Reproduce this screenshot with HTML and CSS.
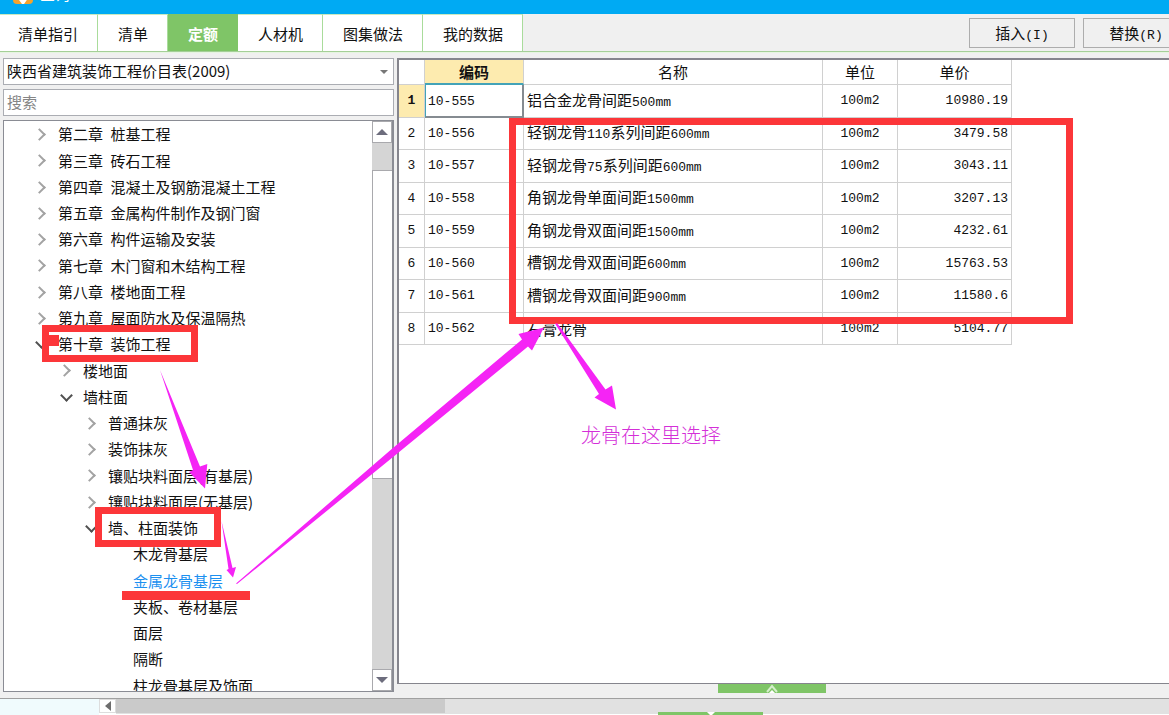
FILE: index.html
```html
<!DOCTYPE html>
<html lang="zh-CN">
<head>
<meta charset="utf-8">
<title>查询</title>
<link rel="stylesheet" href="styles.css">
</head>
<body>
<header class="titlebar">
  <svg class="app-icon" width="20" height="20" viewBox="0 0 20 20" aria-hidden="true"><rect width="20" height="20" rx="4" fill="#f5a32c"/><path d="M4 10 L10 18 L17 8" fill="none" stroke="#fff" stroke-width="4"/></svg>
  <span>查询</span>
</header>

<div class="toolbar">
  <nav class="tabs">
    <button class="tab">清单指引</button>
    <button class="tab">清单</button>
    <button class="tab active">定额</button>
    <button class="tab">人材机</button>
    <button class="tab">图集做法</button>
    <button class="tab">我的数据</button>
  </nav>
  <div class="actions">
    <button class="action">插入<span class="key">(I)</span></button>
    <button class="action">替换<span class="key">(R)</span></button>
  </div>
</div>

<main class="workspace">
  <section class="sidebar">
    <div class="select-wrap">
      <select class="field" aria-label="定额库"><option>陕西省建筑装饰工程价目表(2009)</option></select>
      <svg class="select-arrow" width="8" height="4" viewBox="0 0 8 4" aria-hidden="true"><path d="M0 0H8L4 4Z"/></svg>
    </div>
    <input class="field" type="text" placeholder="搜索" aria-label="搜索">
    <div class="tree-box">
      <ul class="tree">
        <li class="node l1 closed"><span class="chapter">第二章</span> 桩基工程</li>
        <li class="node l1 closed"><span class="chapter">第三章</span> 砖石工程</li>
        <li class="node l1 closed"><span class="chapter">第四章</span> 混凝土及钢筋混凝土工程</li>
        <li class="node l1 closed"><span class="chapter">第五章</span> 金属构件制作及钢门窗</li>
        <li class="node l1 closed"><span class="chapter">第六章</span> 构件运输及安装</li>
        <li class="node l1 closed"><span class="chapter">第七章</span> 木门窗和木结构工程</li>
        <li class="node l1 closed"><span class="chapter">第八章</span> 楼地面工程</li>
        <li class="node l1 closed"><span class="chapter">第九章</span> 屋面防水及保温隔热</li>
        <li class="node l1 open"><span class="chapter">第十章</span> 装饰工程</li>
        <li class="node l2 closed">楼地面</li>
        <li class="node l2 open">墙柱面</li>
        <li class="node l3 closed">普通抹灰</li>
        <li class="node l3 closed">装饰抹灰</li>
        <li class="node l3 closed">镶贴块料面层(有基层)</li>
        <li class="node l3 closed">镶贴块料面层(无基层)</li>
        <li class="node l3 open">墙、柱面装饰</li>
        <li class="node l4">木龙骨基层</li>
        <li class="node l4 selected">金属龙骨基层</li>
        <li class="node l4">夹板、卷材基层</li>
        <li class="node l4">面层</li>
        <li class="node l4">隔断</li>
        <li class="node l4">柱龙骨基层及饰面</li>
      </ul>
      <div class="vscroll">
        <button class="vbtn" aria-label="向上滚动"><svg width="12" height="6" viewBox="0 0 12 6"><path d="M0 6H12L6 0Z"/></svg></button>
        <div class="vtrack"><div class="vthumb"></div></div>
        <button class="vbtn" aria-label="向下滚动"><svg width="12" height="6" viewBox="0 0 12 6"><path d="M0 0H12L6 6Z"/></svg></button>
      </div>
    </div>
  </section>

  <section class="content">
    <div class="grid-box">
      <table class="grid">
        <colgroup><col class="c-num"><col class="c-code"><col class="c-name"><col class="c-unit"><col class="c-price"></colgroup>
        <thead><tr><th></th><th class="current">编码</th><th>名称</th><th>单位</th><th>单价</th></tr></thead>
        <tbody>
          <tr><th class="current">1</th><td class="code focus">10-555</td><td class="name">铝合金龙骨间距<span class="num">500mm</span></td><td class="unit">100m2</td><td class="price">10980.19</td></tr>
          <tr><th>2</th><td class="code">10-556</td><td class="name">轻钢龙骨<span class="num">110</span>系列间距<span class="num">600mm</span></td><td class="unit">100m2</td><td class="price">3479.58</td></tr>
          <tr><th>3</th><td class="code">10-557</td><td class="name">轻钢龙骨<span class="num">75</span>系列间距<span class="num">600mm</span></td><td class="unit">100m2</td><td class="price">3043.11</td></tr>
          <tr><th>4</th><td class="code">10-558</td><td class="name">角钢龙骨单面间距<span class="num">1500mm</span></td><td class="unit">100m2</td><td class="price">3207.13</td></tr>
          <tr><th>5</th><td class="code">10-559</td><td class="name">角钢龙骨双面间距<span class="num">1500mm</span></td><td class="unit">100m2</td><td class="price">4232.61</td></tr>
          <tr><th>6</th><td class="code">10-560</td><td class="name">槽钢龙骨双面间距<span class="num">600mm</span></td><td class="unit">100m2</td><td class="price">15763.53</td></tr>
          <tr><th>7</th><td class="code">10-561</td><td class="name">槽钢龙骨双面间距<span class="num">900mm</span></td><td class="unit">100m2</td><td class="price">11580.6</td></tr>
          <tr><th>8</th><td class="code">10-562</td><td class="name">石膏龙骨</td><td class="unit">100m2</td><td class="price">5104.77</td></tr>
        </tbody>
      </table>
    </div>
    <div class="splitter">
      <button class="handle" aria-label="展开"><svg width="12" height="9" viewBox="0 0 12 9"><path d="M1 8L6 2L11 8" fill="none" stroke="#d5eecb" stroke-width="2"/><path d="M3 9L6 6L9 9Z" fill="#fff"/></svg></button>
    </div>
  </section>
</main>

<footer class="bottom">
  <div class="corner"></div>
  <button class="hbtn" aria-label="向左滚动"><svg width="6" height="10" viewBox="0 0 6 10"><path d="M6 0V10L0 5Z"/></svg></button>
  <div class="htrack"><div class="hthumb"></div></div>
  <div class="lower-handle"><svg width="8" height="3" viewBox="0 0 8 3"><path d="M0 0H8L5 3H3Z" fill="#fff"/></svg></div>
</footer>

<svg class="marks" width="1169" height="715" viewBox="0 0 1169 715" aria-hidden="true">
  <g fill="none" stroke="#fc3639" stroke-width="7">
    <rect x="45.500" y="328.500" width="149" height="30"/>
    <rect x="98.500" y="510.500" width="119" height="33"/>
    <rect x="512.500" y="121.500" width="557" height="199"/>
  </g>
  <g fill="#fc3639">
    <rect x="49" y="335" width="10" height="11"/>
    <rect x="122" y="591" width="128" height="9"/>
  </g>
  <g fill="#f524f5">
    <path d="M160 370L200 466.500L207.300 464L205 488.500L189 472L193 470Z"/>
    <path d="M221.500 521L232.500 568L236 567L233 577.500L226.500 570L228.500 569Z"/>
    <path d="M236 583.500L390 450.500L522 339.500L518.500 334L544 327.500L532 350.500L528 346.500L390 459.500L237 584Z"/>
    <path d="M555 323.500L557.500 323.500L605.500 389.500L612 385.500L616 409.500L594.500 397.500L599 394Z"/>
  </g>
</svg>
<p class="note">龙骨在这里选择</p>
</body>
</html>
```

FILE: styles.css
```css
* { box-sizing: border-box; }

body {
  margin: 0;
  height: 100vh;
  display: flex;
  flex-direction: column;
  overflow: hidden;
  position: relative;
  background: #f0f0f0;
  color: #111;
  font: 15px/20px "Noto Sans CJK SC", sans-serif;
}

button, input, select { font: inherit; color: inherit; }
button { padding: 0; border: 0; background: none; }

.titlebar {
  flex: none;
  height: 14px;
  padding: 0 13px 10px;
  display: flex;
  align-items: flex-end;
  gap: 7px;
  overflow: hidden;
  background: #00aaf3;
  color: #fff;
}
.app-icon { flex: none; }

.toolbar {
  flex: none;
  display: flex;
  height: 38px;
  border-bottom: 1px solid #a5cf98;
}
.tabs { display: flex; }
.tab {
  padding: 2px 19px 0 20px;
  border-right: 1px solid #a9dc9b;
  border-top: 1px solid #c9e9c0;
  background: #fff;
  white-space: nowrap;
}
.tab:first-child { padding-left: 18px; }
.tab.active { background: #7fc567; border-color: #7fc567; color: #fff; font-weight: 700; }

.actions {
  margin-left: auto;
  margin-right: -20px;
  padding: 4px 0 3px;
  display: flex;
  gap: 8px;
}
.action { width: 106px; border: 1px solid #adadad; }
.key { font: 13px "Liberation Mono", monospace; }

.workspace {
  flex: 1;
  min-height: 0;
  display: flex;
  gap: 3px;
  padding-top: 5px;
  border-top: 1px solid #e6f5e1;
}

.sidebar {
  flex: none;
  width: 394px;
  padding: 0 0 6px 3px;
  display: flex;
  flex-direction: column;
  gap: 4px;
}
.select-wrap { position: relative; display: flex; }
.field {
  appearance: none;
  width: 100%;
  height: 27px;
  padding: 0 3px 2px;
  border: 1px solid #abadb3;
  border-radius: 0;
  background: #fff;
}
.field::placeholder { color: #858585; opacity: 1; }
.select-arrow { position: absolute; right: 6px; top: 12px; fill: #777; }

.tree-box {
  flex: 1;
  min-height: 0;
  display: flex;
  border: 1px solid #8a8c94;
  border-right-width: 2px;
  background: #fff;
}
.tree { flex: 1; margin: 0; padding: 0; list-style: none; overflow: hidden; }
.node {
  height: 26px;
  display: flex;
  align-items: center;
  white-space: pre;
}
.node:nth-child(4n + 2) { height: 27px; }
.chapter { margin-right: 4px; }
.l1 { padding-left: 33px; }
.l2 { padding-left: 58px; }
.l3 { padding-left: 83px; }
.l4 { padding-left: 129px; }
.selected { color: #1c90f0; }
.closed::before, .open::before {
  content: "";
  flex: none;
  width: 7px;
  height: 7px;
  margin: 0 14px 0 -2px;
  border: solid #a3a3a3;
  border-width: 2px 2px 0 0;
  transform: rotate(45deg);
}
.open::before {
  margin: 0 12px 4px 0;
  border-color: #505050;
  transform: rotate(135deg);
}

.vscroll { width: 20px; display: flex; flex-direction: column; background: #d5d5d5; }
.vbtn {
  height: 22px;
  display: flex;
  align-items: center;
  justify-content: center;
  border: 1px solid #a9a9ad;
  background: #fff;
  fill: #6d6d7d;
}
.vtrack { flex: 1; padding-top: 27px; }
.vthumb { height: 62%; background: #fff; border: solid #a9a9ad; border-width: 1px 0 1px 1px; }

.content { flex: 1; min-width: 0; display: flex; flex-direction: column; }
.grid-box {
  flex: 1;
  min-height: 0;
  border: solid #85858d;
  border-width: 2px 0 1px 2px;
  background: #fff;
}
.grid { width: 613px; table-layout: fixed; border-collapse: separate; border-spacing: 0; }
.c-num { width: 26px; }
.c-code { width: 99px; }
.c-name { width: 299px; }
.c-unit { width: 75px; }
.c-price { width: 114px; }
.grid th, .grid td { padding: 0 3px; border: solid #d0d0d0; border-width: 0 1px 1px 0; font-weight: 400; }
.grid thead th { height: 25px; }
.grid tbody tr { height: 32px; }
.grid tbody tr:nth-child(odd) { height: 33px; }
.grid tbody th, .code, .unit, .price, .num { font: 13px/20px "Liberation Mono", monospace; }
.grid tbody th { padding: 0; }
.grid .current { background: #fdebaf; font-weight: 700; }
.grid thead .current { border-bottom: 2px solid #43a3b8; }
.grid .code.focus { border: solid #858b91; border-width: 0 2px 2px 1px; border-left-color: #43a3b8; padding: 2px 2px 0; }
.unit { text-align: center; }
.price { text-align: right; }

.splitter { height: 14px; display: flex; justify-content: center; padding-right: 22px; }
.handle { width: 108px; height: 9px; display: flex; justify-content: center; background: #7fc567; }

.bottom {
  flex: none;
  position: relative;
  display: flex;
  height: 17px;
  border-top: 1px solid #a0a0a0;
  background: #fff;
}
.corner { width: 99px; background: #f0fbfd; }
.hbtn {
  width: 17px;
  height: 14px;
  display: flex;
  align-items: center;
  justify-content: center;
  border: 1px solid #ddd;
  background: #fff;
  fill: #6d6d6d;
}
.htrack { flex: 1; height: 15px; background: #e1e1e1; }
.hthumb { width: 329px; height: 14px; background: #cacaca; }
.lower-handle {
  position: absolute;
  left: 658px;
  bottom: 0;
  width: 105px;
  height: 3px;
  display: flex;
  justify-content: center;
  background: #7fc567;
}

.marks { position: absolute; left: 0; top: 0; pointer-events: none; }
.note {
  position: absolute;
  left: 581px;
  top: 420px;
  margin: 0;
  color: #d42fd8;
  font-size: 20px;
  font-weight: 300;
  line-height: 30px;
}
```
